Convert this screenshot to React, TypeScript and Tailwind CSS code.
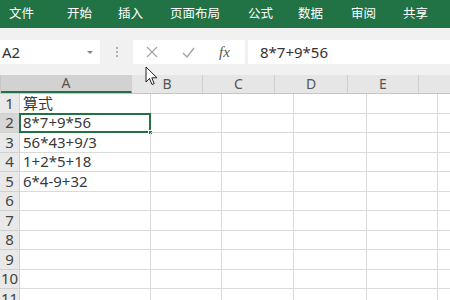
import React from "react";

const menus: { t: string; w: string }[] = [
  { t: "文件", w: "w-[58px]" },
  { t: "开始", w: "w-[51px]" },
  { t: "插入", w: "w-[52px]" },
  { t: "页面布局", w: "w-[78px]" },
  { t: "公式", w: "w-[50px]" },
  { t: "数据", w: "w-[53px]" },
  { t: "审阅", w: "w-[52px]" },
  { t: "共享", w: "w-[40px]" },
];
const cols = [
  { l: "A", w: "w-[131px]" },
  { l: "B", w: "w-[71px]" },
  { l: "C", w: "w-[72px]" },
  { l: "D", w: "w-[73px]" },
  { l: "E", w: "w-[71px]" },
  { l: "", w: "w-[40px]" },
];
const data: Record<number, string> = {
  1: "算式",
  2: "8*7+9*56",
  3: "56*43+9/3",
  4: "1+2*5+18",
  5: "6*4-9+32",
};

export default function App() {
  const font = { fontFamily: '"Noto Sans", "Noto Sans CJK SC", sans-serif' };
  return (
    <div className="w-[450px] h-[300px] overflow-hidden bg-white relative" style={font}>
      {/* Ribbon */}
      <div className="h-[28px] bg-[#217346] flex items-center pl-[9px] text-white text-[12.5px] leading-none">
        {menus.map((m) => (
          <span key={m.t} className={`${m.w} shrink-0 whitespace-nowrap`}>{m.t}</span>
        ))}
      </div>
      {/* Formula bar */}
      <div className="h-[47px] bg-[#f1f1f1] flex items-start pt-[12px]">
        <div className="w-[100px] h-[24px] bg-white flex items-center justify-between pl-[2px] pr-[7px]">
          <span className="text-[15px] text-[#333] leading-none">A2</span>
          <span className="w-0 h-0 border-l-[3px] border-r-[3px] border-t-[3px] border-l-transparent border-r-transparent border-t-[#888]" />
        </div>
        <div className="w-[33px] h-[24px] flex flex-col items-center justify-center gap-[2px]">
          <span className="w-[2px] h-[2px] bg-[#b0b0b0]" />
          <span className="w-[2px] h-[2px] bg-[#b0b0b0]" />
          <span className="w-[2px] h-[2px] bg-[#b0b0b0]" />
        </div>
        <div className="w-[112px] h-[24px] bg-white flex items-center">
          <svg width="12" height="12" viewBox="0 0 12 12" className="ml-[13px]">
            <path d="M1 1 L11 11 M11 1 L1 11" stroke="#a8a8a8" strokeWidth="1.3" />
          </svg>
          <svg width="13" height="11" viewBox="0 0 13 11" className="ml-[24px]">
            <path d="M1 6 L5 10 L12 1" stroke="#a8a8a8" strokeWidth="1.5" fill="none" />
          </svg>
          <span className="ml-[24px] text-[15px] italic text-[#555] leading-none" style={{ fontFamily: '"Liberation Serif", serif' }}>fx</span>
        </div>
        <div className="ml-[3px] flex-1 h-[24px] bg-white flex items-center pl-[12px]">
          <span className="text-[15px] text-[#333] leading-none">8*7+9*56</span>
        </div>
      </div>
      {/* Grid */}
      <div className="flex flex-col">
        <div className="flex h-[19px] bg-[#e6e6e6] border-b border-[#c6c6c6]">
          <div className="w-[20px] h-full border-r border-[#c6c6c6] relative">
            <span className="absolute right-[2px] bottom-[2px] w-0 h-0" style={{ borderBottom: "10px solid #b8b8b8", borderLeft: "12px solid transparent" }} />
          </div>
          {cols.map((c, i) => (
            <div
              key={i}
              className={`${c.w} h-full shrink-0 border-r border-[#d0d0d0] flex items-center justify-center text-[14px] text-[#555] leading-none ${i === 0 ? "bg-[#d2d2d2] border-b-2 border-b-[#217346]" : ""}`}
            >
              {c.l}
            </div>
          ))}
        </div>
        {Array.from({ length: 11 }, (_, r) => r + 1).map((r) => (
          <div key={r} className="flex h-[19.5px] shrink-0">
            <div className={`w-[20px] shrink-0 h-full border-r border-b border-[#d0d0d0] flex items-center justify-center text-[15px] text-[#444] leading-none ${r === 2 ? "bg-[#d6d6d6]" : "bg-[#e9e9e9]"}`}>
              {r}
            </div>
            {cols.map((c, i) => (
              <div
                key={i}
                className={`${c.w} shrink-0 h-full border-r border-b border-[#dadada] flex items-center pl-[3px] text-[15px] text-[#3a3a3a] leading-none relative`}
              >
                {i === 0 ? data[r] ?? "" : ""}
                {i === 0 && r === 2 && (
                  <div className="absolute left-[-1px] top-[-1px] right-[-1px] bottom-[-1px] border-2 border-[#217346]">
                    <div className="absolute right-[-4px] bottom-[-4px] w-[5px] h-[5px] bg-[#217346] border border-white" />
                  </div>
                )}
              </div>
            ))}
          </div>
        ))}
      </div>
      {/* Mouse cursor */}
      <svg className="absolute left-[145px] top-[66px]" width="14" height="21" viewBox="0 0 14 21">
        <path d="M1 1 L1 16 L4.5 12.5 L7 18.5 L9.2 17.6 L6.8 11.8 L12 11.8 Z" fill="white" stroke="#222" strokeWidth="1" strokeLinejoin="round" />
      </svg>
    </div>
  );
}
